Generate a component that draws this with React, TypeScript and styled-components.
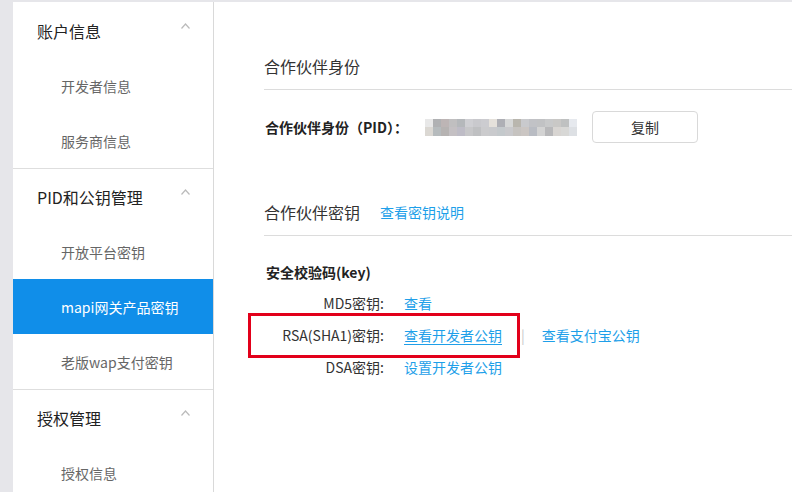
import React from 'react';
import styled, { createGlobalStyle } from 'styled-components';

const GlobalStyle = createGlobalStyle`
  html, body {
    margin: 0;
    padding: 0;
    height: 100%;
    overflow: hidden;
  }
  body {
    font-family: "Noto Sans CJK SC", "Noto Sans", sans-serif;
    color: #333;
  }
`;

const Page = styled.div`
  display: flex;
  height: 100vh;
  box-sizing: border-box;
  padding: 2px 0 0 13px;
  background: #e6e6ea;
  overflow: hidden;
`;

const Sidebar = styled.aside`
  flex: 0 0 200px;
  padding-top: 1px;
  background: #fff;
  border-right: 1px solid #d9d9d9;
`;

const Group = styled.div`
  border-bottom: 1px solid #dedede;
`;

const GroupHeader = styled.div`
  display: flex;
  align-items: center;
  justify-content: space-between;
  height: 55px;
  padding: 0 23px 0 24px;
  font-size: 16px;
  color: #222;
`;

const Chevron = styled.svg`
  width: 9px;
  height: 6px;
  margin-bottom: 9px;
  fill: none;
  stroke: #bbb;
  stroke-width: 1.2;
`;

const NavItem = styled.div<{ $active?: boolean }>`
  display: flex;
  align-items: center;
  height: 55px;
  padding-left: 48px;
  font-size: 14px;
  color: ${(p) => (p.$active ? '#fff' : '#666')};
  background: ${(p) => (p.$active ? '#108ee9' : 'transparent')};
`;

const Main = styled.main`
  flex: 1;
  background: #fff;
  padding: 52px 0 0 50px;
`;

const SectionHead = styled.div<{ $gap?: number }>`
  display: flex;
  align-items: center;
  gap: 20px;
  margin-top: ${(p) => p.$gap ?? 0}px;
  padding-bottom: 11px;
  border-bottom: 1px solid #dcdcdc;
`;

const SectionTitle = styled.h2`
  margin: 0;
  font-size: 16px;
  font-weight: 400;
  line-height: 24px;
  color: #333;
`;

const Link = styled.a<{ $underline?: boolean }>`
  font-size: 14px;
  line-height: 20px;
  color: #1e9fe9;
  text-decoration: ${(p) => (p.$underline ? 'underline' : 'none')};
  text-underline-offset: 3px;
  cursor: pointer;
`;

const PidRow = styled.div`
  display: flex;
  align-items: center;
  height: 32px;
  margin-top: 21px;
  padding-left: 1px;
`;

const BoldLabel = styled.span`
  font-size: 14px;
  font-weight: 700;
  line-height: 20px;
  color: #222;
`;

const Mosaic = styled.svg`
  display: block;
  width: 152px;
  height: 17px;
  margin: 0 15px 0 17px;
`;

const CopyButton = styled.button`
  width: 106px;
  height: 32px;
  border: 1px solid #d9d9d9;
  border-radius: 4px;
  background: #fff;
  font-family: inherit;
  font-size: 14px;
  color: #333;
`;

const KeyTitle = styled.div`
  margin: 26px 0 5px 2px;
  font-size: 14px;
  font-weight: 700;
  line-height: 20px;
  color: #222;
`;

const KeyRow = styled.div<{ $marked?: boolean }>`
  position: relative;
  display: flex;
  align-items: center;
  height: 32px;

  ${(p) =>
    p.$marked &&
    `
    &::after {
      content: '';
      position: absolute;
      left: -16px;
      top: -6px;
      width: 272px;
      height: 45px;
      box-sizing: border-box;
      border: 3px solid #e2001a;
      pointer-events: none;
    }
  `}
`;

const KeyLabel = styled.span`
  width: 120px;
  margin-right: 20px;
  text-align: right;
  font-size: 14px;
  line-height: 20px;
  color: #333;
`;

const Divider = styled.span`
  margin: 0 17px 0 19px;
  font-size: 14px;
  color: #c8c8c8;
`;

const mosaicRows = [
  ['#e8e8e8', '#b0b1b3', '#bdb5b5', '#c0bfc0', '#b5b8bb', '#cfcfd3', '#c9c9cd', '#ccccd0', '#e5e1db', '#aeafb5', '#d6d7d7', '#b9b6ae', '#c9cacd', '#c1c2c6', '#c1c2c4', '#c8c9ca', '#c9c8c6', '#bfc1c1', '#e6e9ee'],
  ['#dbd8d3', '#b6bbbd', '#b6b3b2', '#c4c0c3', '#bebcc6', '#c7c7c9', '#bfc0c2', '#cbcbcd', '#c9cacd', '#c4c9cc', '#c9c9cc', '#c6c3c0', '#cbc6c3', '#b9bcc3', '#d3d3d3', '#b8b8ba', '#d8d5d2', '#d8d8d6', '#dde0e4'],
];

const menu = [
  { title: '账户信息', items: ['开发者信息', '服务商信息'] },
  { title: 'PID和公钥管理', items: ['开放平台密钥', 'mapi网关产品密钥', '老版wap支付密钥'] },
  { title: '授权管理', items: ['授权信息'] },
];

const activeItem = 'mapi网关产品密钥';

const App: React.FC = () => {
  return (
    <>
      <GlobalStyle />
      <Page>
        <Sidebar>
          {menu.map((group) => (
            <Group key={group.title}>
              <GroupHeader>
                {group.title}
                <Chevron viewBox="0 0 9 6">
                  <polyline points="0.5,5.5 4.5,1 8.5,5.5" />
                </Chevron>
              </GroupHeader>
              {group.items.map((item) => (
                <NavItem key={item} $active={item === activeItem}>
                  {item}
                </NavItem>
              ))}
            </Group>
          ))}
        </Sidebar>

        <Main>
          <SectionHead>
            <SectionTitle>合作伙伴身份</SectionTitle>
          </SectionHead>
          <PidRow>
            <BoldLabel>合作伙伴身份（PID）：</BoldLabel>
            <Mosaic viewBox="0 0 152 17">
              {mosaicRows.map((row, r) =>
                row.map((c, i) => (
                  <rect key={`${r}-${i}`} x={i * 8} y={r * 8} width={8} height={r === 0 ? 8 : 9} fill={c} />
                ))
              )}
            </Mosaic>
            <CopyButton>复制</CopyButton>
          </PidRow>

          <SectionHead $gap={57}>
            <SectionTitle>合作伙伴密钥</SectionTitle>
            <Link>查看密钥说明</Link>
          </SectionHead>

          <KeyTitle>安全校验码(key)</KeyTitle>
          <KeyRow>
            <KeyLabel>MD5密钥:</KeyLabel>
            <Link>查看</Link>
          </KeyRow>
          <KeyRow $marked>
            <KeyLabel>RSA(SHA1)密钥:</KeyLabel>
            <Link $underline>查看开发者公钥</Link>
            <Divider>|</Divider>
            <Link>查看支付宝公钥</Link>
          </KeyRow>
          <KeyRow>
            <KeyLabel>DSA密钥:</KeyLabel>
            <Link>设置开发者公钥</Link>
          </KeyRow>
        </Main>
      </Page>
    </>
  );
};

export default App;
